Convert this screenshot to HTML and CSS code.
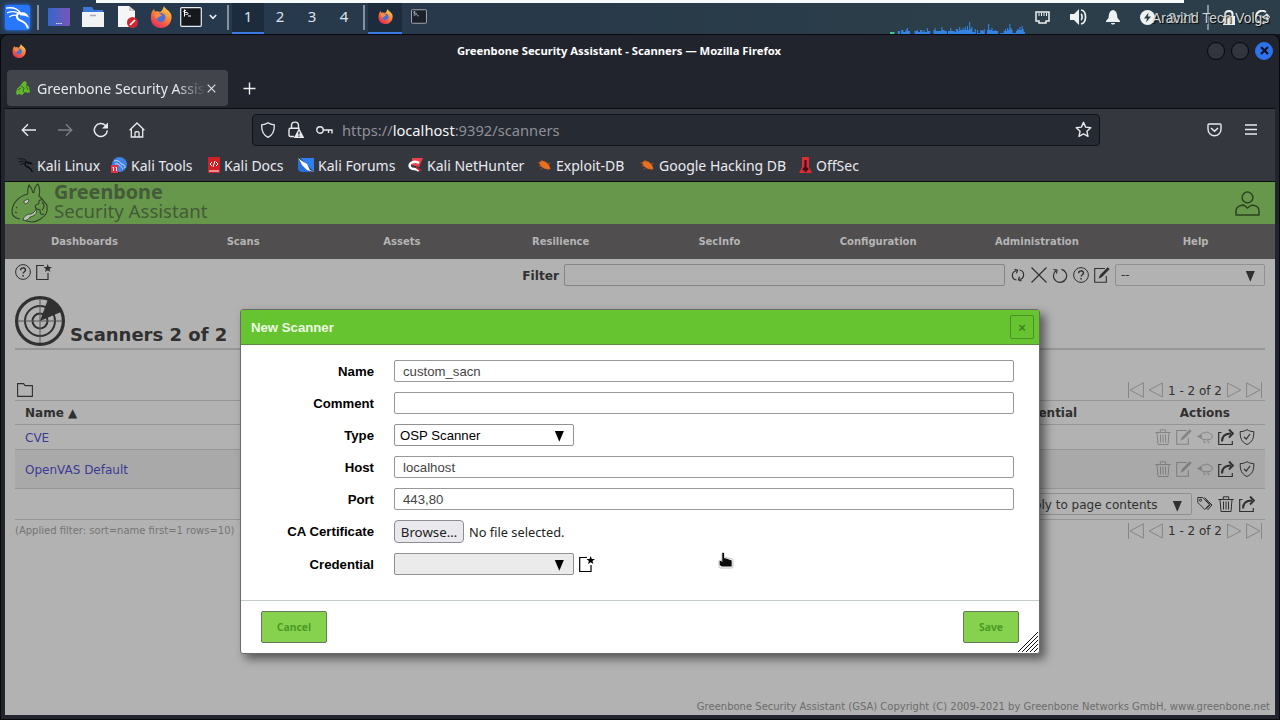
FILE: index.html
```
<!DOCTYPE html>
<html lang="en">
<head>
    <meta charset="utf-8">
    <title>Greenbone Security Assistant - Scanners</title>
    <link rel="stylesheet" href="styles.css">
</head>
<body>
    <svg class="defs">
        <linearGradient id="fox-grad" x1="0.8" y1="0" x2="0.2" y2="1">
            <stop offset="0" stop-color="#ffd84a"/>
            <stop offset="0.45" stop-color="#f9823c"/>
            <stop offset="1" stop-color="#e0245a"/>
        </linearGradient>
        <linearGradient id="desk-grad">
            <stop offset="0" stop-color="#3566cc"/>
            <stop offset="1" stop-color="#7a55b8"/>
        </linearGradient>
        <symbol id="firefox" viewBox="0 0 22 22">
            <path d="M14 0c1 3 5 4 7 8 2 6-2 14-10 14C4 22 0 17 1 10c0-3 1-5 3-7l1 3c2-1 3-1 5 0 2-1 3-3 4-6z" fill="url(#fox-grad)"/>
            <circle cx="10.800" cy="11.500" r="4.600" fill="#4b6fd6"/>
            <path d="M4 6c3-1 5 0 6 2l2 1c-1 2-4 1-5 4-2-1-3-4-3-7z" fill="#f98a3e"/>
        </symbol>
        <symbol id="dragon" viewBox="0 0 24 24">
            <path d="M1 3c6-1 11 0 14 5M2 7.500c5-2 9-1 12 1M4 11.500c3-2 6-2 8-1" fill="none" stroke="currentColor" stroke-width="1.300"/>
            <path d="M15 7.500c-4 0-5 5-1 7 3 1.500 7 2 8 8" fill="none" stroke="currentColor" stroke-width="2"/>
            <path d="M13 8c4-2 8-1 10 4-3-2-6-2-8-2z" fill="currentColor"/>
        </symbol>
        <symbol id="term" viewBox="0 0 22 20">
            <rect x="0.700" y="0.700" width="20.600" height="18.600" rx="1" fill="#15181c" stroke="#e8ecee" stroke-width="1.200"/>
            <path d="M6 3.500c-3-.5-3 2 0 2s3 2.500-.5 2M4.500 2.500v7M8 9h3" fill="none" stroke="#fff" stroke-width="1"/>
        </symbol>
        <symbol id="bug" viewBox="0 0 14 14">
            <path d="M1.500 4.500l3-2 4 1.500 3 3 1.500 4-2.500.5-4-1-3.500-2.500z" fill="#e8701e"/>
            <path d="M5 4L4 2M1 8h3M5 10l-2 1.500M10 10l1 2M0 5h3M10 6l3-.5" stroke="#b9531a" fill="none" stroke-width=".8"/>
        </symbol>
        <symbol id="help" viewBox="0 0 16 16">
            <circle cx="8" cy="8" r="7.400" fill="none" stroke="currentColor"/>
            <path d="M5.600 6.300c0-3.300 4.900-3.200 4.900-.3 0 1.700-2.400 1.800-2.400 3.600" fill="none" stroke="currentColor" stroke-width="1.400"/>
            <path d="M7.300 11h1.500v1.500H7.300z" fill="currentColor"/>
        </symbol>
        <symbol id="new" viewBox="0 0 16 16">
            <path d="M8 1.500H.700v14h11.300V9" fill="none" stroke="currentColor" stroke-width="1.200"/>
            <path d="M11.700 0l1.100 3h3.200l-2.500 2 .9 3-2.700-1.800L9 8l.9-3-2.500-2h3.200z" fill="currentColor"/>
        </symbol>
        <symbol id="edit" viewBox="0 0 16 16">
            <path d="M11 1.500H.700v13.800h11.600V9" fill="none" stroke="currentColor" stroke-width="1.100"/>
            <path d="M13.700.300l2 1.800L8 10l-3.500 1.700L6 8z" fill="currentColor"/>
        </symbol>
        <symbol id="trash" viewBox="0 0 16 16">
            <path d="M.300 3.500h15.400M5.300 3.200V.800h5.400v2.400M2 3.500l1 12h10l1-12M5.500 5.500v8M8 5.500v8M10.500 5.500v8" fill="none" stroke="currentColor"/>
        </symbol>
        <symbol id="sheep" viewBox="0 0 16 16">
            <path d="M4 6c1-3 4-2 4.500-2.300 2-1.200 3.300-.2 4 .8 2 0 3.500 1.700 2.500 4 0 1.500-2 2-3 1.800-2 .7-4 .7-5 0-2 .2-3-.8-3-2z" fill="none" stroke="currentColor"/>
            <path d="M0 7.500L4.500 5v5z" fill="currentColor"/>
            <path d="M7 10.500v3h1.500M11 10.500v3h1.500" fill="none" stroke="currentColor" stroke-width=".9"/>
        </symbol>
        <symbol id="export" viewBox="0 0 16 16">
            <path d="M3.500 3.500H.700v12h13.600V12" fill="none" stroke="currentColor" stroke-width="1.200"/>
            <path d="M4 12.500c0-6 3-8 9-8" fill="none" stroke="currentColor" stroke-width="1.900"/>
            <path d="M11 .500l4 4-4 4" fill="none" stroke="currentColor" stroke-width="1.900"/>
        </symbol>
        <symbol id="shield" viewBox="0 0 16 16">
            <path d="M8 .600c2 1.500 4.500 2 6.800 2C15 9 13.500 13 8 15.500 2.500 13 1 9 1.200 2.600 3.500 2.600 6 2.100 8 .600z" fill="none" stroke="currentColor"/>
            <path d="M5 8l2.200 2.200L11 5" fill="none" stroke="currentColor" stroke-width="1.200"/>
        </symbol>
        <symbol id="tags" viewBox="0 0 16 16">
            <path d="M.800 1.500h5l6.500 7-4.500 5L.800 6.500zM7.500 1.500l7.500 7.500-4.500 5M9.300 13l4-4.300-5-5" fill="none" stroke="currentColor"/>
            <circle cx="3.600" cy="4.200" r="1.100" fill="none" stroke="currentColor"/>
        </symbol>
        <symbol id="first" viewBox="0 0 16 16">
            <path d="M.500 0v16M15.400.800v14.400L2 8z" fill="none" stroke="currentColor" stroke-width=".9"/>
        </symbol>
        <symbol id="prev" viewBox="0 0 16 16">
            <path d="M14.400 1v14L1.200 8z" fill="none" stroke="currentColor" stroke-width=".9"/>
        </symbol>
    </svg>

    <div class="top-strip"></div>
    <header class="panel">
        <div class="launcher"><svg class="kali" viewBox="0 0 24 24"><use href="#dragon"/></svg></div>
        <i class="sep"></i>
        <div class="launcher"><svg width="22" height="18" viewBox="0 0 22 18"><rect width="22" height="18" rx="1" fill="url(#desk-grad)"/><path d="M8 15.500h6" stroke="#dde" stroke-dasharray="1.500 .700"/></svg></div>
        <div class="launcher"><svg width="22" height="20" viewBox="0 0 22 20"><path d="M1 0h9l2 3h9v5H1z" fill="#3b78d8"/><path d="M0 5h22v15H0z" fill="#f1f2f3"/><path d="M8 8.500h6" stroke="#aab" stroke-width="1.500"/></svg></div>
        <div class="launcher"><svg width="21" height="22" viewBox="0 0 21 22"><path d="M1 0h11l6 5v16H1z" fill="#f5f5f5"/><path d="M12 0v5h6" fill="#ccc"/><circle cx="15.500" cy="16.500" r="5.500" fill="#cf2634"/><path d="M13 19l5-5" stroke="#fff" stroke-width="1.700"/></svg></div>
        <div class="launcher"><svg width="22" height="22"><use href="#firefox"/></svg></div>
        <div class="launcher narrow"><svg width="22" height="20"><use href="#term"/></svg></div>
        <div class="launcher chevron"><svg width="8" height="6" viewBox="0 0 8 6"><path d="M.800 1L4 4.300 7.200 1" fill="none" stroke="#e8ecee" stroke-width="1.700"/></svg></div>
        <i class="sep wide"></i>
        <div class="workspace active">1</div>
        <div class="workspace">2</div>
        <div class="workspace">3</div>
        <div class="workspace">4</div>
        <i class="sep"></i>
        <div class="task active"><svg width="15" height="15"><use href="#firefox"/></svg></div>
        <div class="task"><svg width="16" height="15" class="dim"><use href="#term"/></svg></div>
        <div class="tray">
            <svg class="graph" width="136" height="12" viewBox="0 0 122 12" preserveAspectRatio="none">
                <path d="M0 10h4v2H0z" fill="#3fc79a"/>
                <path d="M7 12V9h2v3h1V8h2v2h2V8h1V6h1v3h2v3h4V9h2V8h1v2h2V8h2v2h1V8h1v2h2V6h1v3h2v3h3V8h1V6h1v3h3V9h2V5h1v3h2v1h2v3h1V9h2V6h1v3h3v1h1V7h2v2h1V5h1v3h2V6h1v2h1V5h1v3h1V4h1v4h1V0h1v7h1V5h1v5h2V7h1v5h1V8h1v3h2V8h2v1h1V7h1v5h2V8h1V2h1v6h2V6h1v3h2V8h1v1h2v3h2v-1h3V9h1V7h1v2h1V6h1v2h1V2h1v4h1v2h1v3h3V9h1V7h1v1h1V5h1v3h1V4h1v3h1v3h1v2z" fill="#3584e4"/>
            </svg>
            <svg class="ethernet" width="15" height="13" viewBox="0 0 15 13"><path d="M1 1h13v9h-3v2H4v-2H1z" fill="none" stroke="#eef2f2" stroke-width="1.500"/><path d="M4 2v3M6.500 2v3M9 2v3M11.500 2v3" stroke="#eef2f2"/></svg>
            <svg class="volume" width="18" height="16" viewBox="0 0 18 16"><path d="M0 5h4l5-5v16l-5-5H0z" fill="#eef2f2"/><path d="M11 5c1.500 1 1.500 5 0 6M11 1c6 1 6 13 0 14" fill="none" stroke="#eef2f2" stroke-width="1.700"/></svg>
            <svg class="bell" width="14" height="15" viewBox="0 0 14 15"><path d="M7 0c4 1 4 4 4.500 8L14 11v1H0v-1l2.500-3C3 4 3 1 7 0zM5 13h4c0 2-4 2-4 0z" fill="#eef2f2"/></svg>
            <svg class="power" width="15" height="15" viewBox="0 0 15 15"><circle cx="7.500" cy="7.500" r="7.500" fill="#eef2f2"/><path d="M8.500 2.500L4 8.500h3l-1 4 5-6H8z" fill="#2b3e49"/></svg>
            <span class="clock">8:21</span>
            <i class="sep tray-sep"></i>
            <svg class="lock" width="12" height="15" viewBox="0 0 12 15"><path d="M0 6h12v9H0z" fill="#eef2f2"/><path d="M2.500 7V4c0-4 7-4 7 0v3" fill="none" stroke="#eef2f2" stroke-width="2"/></svg>
            <svg class="logout" width="15" height="14" viewBox="0 0 15 14"><path d="M11 2C6-1 1 2 1 7s5 8 10 5M6 7h8M11 4l3 3-3 3" fill="none" stroke="#eef2f2" stroke-width="2"/></svg>
        </div>
        <span class="watermark">Aravind Tech Volgs</span>
    </header>

    <div class="window">
        <div class="titlebar">
            <svg width="14" height="14"><use href="#firefox"/></svg>
            <span class="window-title">Greenbone Security Assistant - Scanners — Mozilla Firefox</span>
            <div class="window-buttons">
                <i></i><i></i>
                <i class="close"><svg width="9" height="9" viewBox="0 0 9 9"><path d="M1 1l7 7M8 1L1 8" stroke="#0d1320" stroke-width="2.200"/></svg></i>
            </div>
        </div>
        <div class="tabs">
            <div class="tab">
                <svg width="15" height="14" viewBox="0 0 15 14"><path d="M0 12l1-4 3-3 3-4 2-1 2 2-1 2 3 2 1 5-2 1-3-1-3 3-3-1-2 1z" fill="#62b52d"/><path d="M5 5l3 2-1 4M10 5l2 4M2 9l3-2" fill="none" stroke="#2f7016"/></svg>
                <span class="tab-title">Greenbone Security Assistant</span>
                <svg width="9" height="9" viewBox="0 0 9 9"><path d="M.700.700l7.600 7.600M8.300.700L.700 8.300" stroke="#dcdde0" stroke-width="1.200"/></svg>
            </div>
            <svg width="13" height="13" viewBox="0 0 13 13"><path d="M6.500.500v12M.500 6.500h12" stroke="#f0f0f2" stroke-width="1.400"/></svg>
        </div>
        <div class="navbar">
            <div class="nav-icons">
                <svg width="16" height="16" viewBox="0 0 16 16"><path d="M15 8H1.500M7 2.300L1.300 8 7 13.700" fill="none" stroke="currentColor" stroke-width="1.400"/></svg>
                <svg width="16" height="16" viewBox="0 0 16 16" class="disabled"><path d="M1 8h13.500M9 2.300L14.700 8 9 13.700" fill="none" stroke="currentColor" stroke-width="1.400"/></svg>
                <svg width="16" height="16" viewBox="0 0 16 16"><path d="M14.300 8.500A6.500 6.500 0 1 1 12.500 3.500L14 5" fill="none" stroke="currentColor" stroke-width="1.500"/><path d="M15 .500v6H9z" fill="currentColor"/></svg>
                <svg width="16" height="16" viewBox="0 0 16 16"><path d="M.600 8.300L8 1l7.400 7.300M2.300 7v8h11.400V7M6 15v-4.500c0-1 4-1 4 0V15" fill="none" stroke="currentColor" stroke-width="1.300"/></svg>
            </div>
            <div class="urlbar">
                <svg width="16" height="16" viewBox="0 0 16 16"><path d="M8 .800c2 1.500 4 1.900 6.300 2.100C14.500 9 13 13 8 15.300 3 13 1.500 9 1.700 2.900 4 2.700 6 2.300 8 .800z" fill="none" stroke="currentColor" stroke-width="1.300"/></svg>
                <svg width="16" height="17" viewBox="0 0 16 17"><path d="M3.500 7V4.500c0-4.500 7-4.500 7 0V7M6 15.500H2.500c-1 0-1.500-.5-1.500-1.500V9c0-1 .5-1.700 1.500-1.700h9" fill="none" stroke="currentColor" stroke-width="1.400"/><path d="M11 7l5.200 10H5.800z" fill="currentColor"/><path d="M11 10.500v3M11 14.500v1.300" stroke="#262a33" stroke-width="1.300"/></svg>
                <svg width="17" height="10" viewBox="0 0 17 10"><circle cx="4" cy="5" r="3.200" fill="none" stroke="currentColor" stroke-width="1.400"/><path d="M7 5h9v3.500M12.500 5v3" fill="none" stroke="currentColor" stroke-width="1.400"/></svg>
                <span class="url">https://<b>localhost</b>:9392/scanners</span>
                <svg width="17" height="17" viewBox="0 0 17 17"><path d="M8.500 1.300l2.100 4.800 5.200.6-3.900 3.500 1.100 5.200-4.500-2.600L4 15.400l1.100-5.200L1.200 6.700l5.200-.6z" fill="none" stroke="currentColor" stroke-width="1.400" stroke-linejoin="round"/></svg>
            </div>
            <div class="nav-end">
                <svg width="15" height="14" viewBox="0 0 15 14"><path d="M2 1h11c.7 0 1 .4 1 1v4c0 9-13 9-13 0V2c0-.6.300-1 1-1z" fill="none" stroke="currentColor" stroke-width="1.400"/><path d="M4 5l3.500 3.300L11 5" fill="none" stroke="currentColor" stroke-width="1.500"/></svg>
                <svg width="12" height="11" viewBox="0 0 12 11"><path d="M0 1h12M0 5.500h12M0 10h12" stroke="currentColor" stroke-width="1.300"/></svg>
            </div>
        </div>
        <nav class="bookmarks">
            <a class="b1"><svg width="17" height="16" class="black"><use href="#dragon"/></svg>Kali Linux</a>
            <a class="b2"><svg width="16" height="16" viewBox="0 0 16 16"><circle cx="8.500" cy="7.500" r="7.500" fill="#3f82e8"/><path d="M3 4c5-1 6 1 7 3 3 0 4 2 4 4M4 7c3-1 5 1 8 5" fill="none" stroke="#cfe0fa"/><path d="M0 8h7v8H0z" fill="#dd3347"/><path d="M1.500 10.500h1V14M4.500 10.500h1V14" stroke="#fff" fill="none"/></svg>Kali Tools</a>
            <a class="b3"><svg width="12" height="16" viewBox="0 0 12 16"><path d="M0 0h12v16H0z" fill="#d11f26"/><path d="M1 14h10" stroke="#fff"/><path d="M4 5L2 7l2 2M8 5l2 2-2 2M7 4L5 10" stroke="#fff" fill="none"/></svg>Kali Docs</a>
            <a class="b4"><svg width="16" height="14" viewBox="0 0 16 14"><path d="M2 0h14v14z" fill="#2f7ff0"/><path d="M0 1v11l3 2h10z" fill="#2670d8"/><path d="M0 0l4 3 5 3 3 6 4 2-7-2-5-5-2-4z" fill="#fff"/></svg>Kali Forums</a>
            <a class="b5"><svg width="15" height="14" viewBox="0 0 15 14"><path d="M4 0h11l-4 9-7-2z" fill="#e8434e"/><path d="M11 5C7 2 0 5 2 9c2 4 6 0 9 4" fill="none" stroke="#fff" stroke-width="2.500"/><path d="M8 9l5 4" stroke="#c8202f" stroke-width="2"/></svg>Kali NetHunter</a>
            <a class="b6"><svg width="15" height="14"><use href="#bug"/></svg>Exploit-DB</a>
            <a class="b7"><svg width="15" height="14"><use href="#bug"/></svg>Google Hacking DB</a>
            <a class="b8"><svg width="13" height="16" viewBox="0 0 13 16"><path d="M3 0h7v10l3 6H0l3-6z" fill="#dd2a35"/><path d="M6.500 3v12M4 13l2.500-3L9 13" stroke="#3a0d12" stroke-width="2" fill="none"/></svg>OffSec</a>
        </nav>

        <main class="page">
            <div class="gsa-header">
                <svg class="dino" width="38" height="41" viewBox="0 0 38 41">
                    <g fill="none" stroke="#31432a" stroke-width="1.100">
                        <path d="M17 11c-1-3 0-6 1-9 2 2 3 4 4 8M23 10c0-4 1-7 4-9 2 4 2 8 1 12l4 4M17 11C8 13 1 20 1 29c0 4 3 6 8 7M32 17c1 3 5 4 4 7 1 3 0 5-1 7-3 4-9 8-14 8-4-1-7 0-9-3"/>
                        <path d="M32 17c-3-1-5 1-4 4M28 21c-4 0-5 3-2 5l3 1c0 4 1 5 4 4M31 19c3 3 2 6 0 8M4 29l2 1M5 25l1-1"/>
                    </g>
                    <path d="M12 37c1-4 4-6 8-6 3-1 4-3 5-5 2 5-2 7-6 8-2 3-4 4-7 3z" fill="#bac4b3" stroke="#31432a" stroke-width=".9"/>
                    <path d="M13 18l4-2 1 2-3 3-2-1z" fill="#c6cec1" stroke="#31432a" stroke-width=".8"/>
                </svg>
                <div class="brand"><b>Greenbone</b><span>Security Assistant</span></div>
                <svg class="user" width="26" height="25" viewBox="0 0 26 25"><circle cx="12.500" cy="6.500" r="5.400" fill="none" stroke="#2b4321" stroke-width="1.500"/><path d="M1 24v-4c0-5 7-7 9-5l2.500 2 2.500-2c3-2 9 0 9 5v4z" fill="none" stroke="#2b4321" stroke-width="1.500"/></svg>
            </div>
            <nav class="menu">
                <span>Dashboards</span><span>Scans</span><span>Assets</span><span>Resilience</span>
                <span>SecInfo</span><span>Configuration</span><span>Administration</span><span>Help</span>
            </nav>
            <div class="content">
                <div class="toolbar">
                    <div class="page-icons"><svg class="icon"><use href="#help"/></svg><svg class="icon"><use href="#new"/></svg></div>
                    <div class="filter">
                        <b>Filter</b>
                        <div class="filter-input"></div>
                        <div class="filter-icons">
                            <svg class="icon" viewBox="0 0 16 16"><path d="M6.500 13C1 12 1 5 6.500 3.500M9.500 3c5.500 1 5.500 8.500 0 9.500" fill="none" stroke="currentColor" stroke-width="1.200"/><path d="M4.500 2.200l3 1-1 3M11.500 14l-3-1.200 1-3" fill="none" stroke="currentColor" stroke-width="1.200"/></svg>
                            <svg class="icon" viewBox="0 0 16 16"><path d="M.500.500l15 15M15.500.500l-15 15" stroke="currentColor" stroke-width="1.200"/></svg>
                            <svg class="icon" viewBox="0 0 16 16"><path d="M4 3.500A6.600 6.600 0 1 0 9.500 2.300" fill="none" stroke="currentColor" stroke-width="1.200"/><path d="M1.500 2.500l3.500.5-.5 3.500" fill="none" stroke="currentColor" stroke-width="1.200"/></svg>
                            <svg class="icon"><use href="#help"/></svg>
                            <svg class="icon"><use href="#edit"/></svg>
                        </div>
                        <div class="select filter-select"><span>--</span><i>▼</i></div>
                    </div>
                </div>
                <div class="section-head">
                    <svg width="50" height="50" viewBox="0 0 50 50">
                        <g fill="none" stroke="#303030"><circle cx="25" cy="25" r="23.400" stroke-width="3.200"/><circle cx="25" cy="25" r="15" stroke-width="2"/><circle cx="25" cy="25" r="7.500" stroke-width="2"/><path d="M25 3v44M3 25h44" stroke="#555"/></g>
                        <path d="M25 25L33 3l6 3 7 10z" fill="#303030"/>
                    </svg>
                    <h1>Scanners 2 of 2</h1>
                </div>
                <div class="pager-row top">
                    <svg width="16" height="14" viewBox="0 0 16 14"><path d="M.600.600h6l1.500 2h7.300v10.800H.600z" fill="none" stroke="#303030" stroke-width="1.100"/></svg>
                    <div class="pager"><svg class="icon"><use href="#first"/></svg><svg class="icon"><use href="#prev"/></svg><span>1 - 2 of 2</span><svg class="icon flip"><use href="#prev"/></svg><svg class="icon flip"><use href="#first"/></svg></div>
                </div>
                <div class="row head"><b class="name">Name ▲</b><b class="cred">Credential</b><b class="actions-title">Actions</b></div>
                <div class="row cve">
                    <a>CVE</a>
                    <div class="actions"><svg class="icon off"><use href="#trash"/></svg><svg class="icon off"><use href="#edit"/></svg><svg class="icon off"><use href="#sheep"/></svg><svg class="icon"><use href="#export"/></svg><svg class="icon"><use href="#shield"/></svg></div>
                </div>
                <div class="row openvas">
                    <a>OpenVAS Default</a>
                    <div class="actions"><svg class="icon off"><use href="#trash"/></svg><svg class="icon off"><use href="#edit"/></svg><svg class="icon off"><use href="#sheep"/></svg><svg class="icon"><use href="#export"/></svg><svg class="icon"><use href="#shield"/></svg></div>
                </div>
                <div class="row bulk">
                    <div class="select bulk-select"><span>Apply to page contents</span><i>▼</i></div>
                    <div class="actions"><svg class="icon"><use href="#tags"/></svg><svg class="icon"><use href="#trash"/></svg><svg class="icon"><use href="#export"/></svg></div>
                </div>
                <div class="pager-row">
                    <small>(Applied filter: sort=name first=1 rows=10)</small>
                    <div class="pager"><svg class="icon"><use href="#first"/></svg><svg class="icon"><use href="#prev"/></svg><span>1 - 2 of 2</span><svg class="icon flip"><use href="#prev"/></svg><svg class="icon flip"><use href="#first"/></svg></div>
                </div>
            </div>
            <footer>Greenbone Security Assistant (GSA) Copyright (C) 2009-2021 by Greenbone Networks GmbH, www.greenbone.net</footer>
        </main>
    </div>

    <div class="dialog">
        <div class="dialog-title"><b>New Scanner</b><div class="dialog-close">×</div></div>
        <div class="form">
            <label>Name</label><div class="input">custom_sacn</div>
            <label>Comment</label><div class="input"></div>
            <label>Type</label><div class="select"><span>OSP Scanner</span><i>▼</i></div>
            <label>Host</label><div class="input">localhost</div>
            <label>Port</label><div class="input">443,80</div>
            <label>CA Certificate</label><div class="file"><span class="browse">Browse…</span>No file selected.</div>
            <label>Credential</label><div class="cred-field"><div class="select empty"><span></span><i>▼</i></div><svg class="icon"><use href="#new"/></svg></div>
        </div>
        <div class="dialog-foot">
            <div class="button">Cancel</div>
            <div class="button save">Save</div>
        </div>
        <svg class="resize" width="20" height="20" viewBox="0 0 20 20"><path d="M0 20L20 0M4 20L20 4M8 20L20 8M12 20l8-8M16 20l4-4" stroke="#111"/></svg>
    </div>
    <svg class="cursor" width="16" height="17" viewBox="0 0 16 17"><path d="M4 1c1-1 2-1 2 0v4l8 2c1 0 1 1 1 2v6c0 1-1 1-2 1H2c-1 0-1-1-1-2V9c0-1 2-1 3 0z" fill="#fff" stroke="#aaa" stroke-width=".7"/><path d="M4.300 1v9L3 9H1.700v4l2 1.500h10V8.500L11 7.500l-2-.7-3-.8V1z" fill="#0b0b0b"/></svg>
</body>
</html>
```
FILE: styles.css
```
* {
    box-sizing: border-box;
}

body {
    margin: 0;
    width: 1280px;
    height: 720px;
    overflow: hidden;
    position: relative;
    background: #11141b;
    font-family: "Noto Sans", sans-serif;
}

svg {
    display: block;
    flex: none;
}

.defs {
    position: absolute;
    width: 0;
    height: 0;
}

i {
    font-style: normal;
}

/* desktop panel */

.top-strip {
    position: absolute;
    left: 96px;
    top: 0;
    width: 1088px;
    height: 3px;
    background: #f7fafa;
}

.panel {
    display: flex;
    align-items: center;
    height: 34px;
    background: linear-gradient(90deg, #26394f, #27394a 35%, #2b3e49 75%);
}

.launcher {
    display: flex;
    justify-content: center;
    align-items: center;
    width: 34px;
    height: 34px;
}

.launcher.narrow {
    width: 26px;
}

.launcher.chevron {
    width: 18px;
}

.kali {
    width: 25px;
    height: 25px;
    color: #fff;
    background: #2777ff;
    border-radius: 2px;
    box-shadow: 0 0 4px #2777ff;
}

.sep {
    width: 2px;
    height: 25px;
    margin: 0 3px;
    background: #8593a0;
}

.sep.wide {
    margin-left: 5px;
}

.workspace,
.task {
    display: flex;
    align-items: center;
    justify-content: center;
    width: 32px;
    height: 34px;
    border-bottom: 2px solid transparent;
    font-size: 15px;
    color: #dde3e8;
}

.task {
    width: 34px;
}

.active {
    background: #1c2c3d;
    border-color: #3b7be0;
}

.dim {
    opacity: .7;
}

.tray {
    display: flex;
    align-items: center;
    flex: 1;
    height: 34px;
    margin-left: 454px;
}

.graph {
    align-self: flex-end;
}

.ethernet {
    margin-left: 9px;
}

.volume {
    margin-left: 20px;
}

.bell {
    margin-left: 18px;
}

.power {
    margin-left: 20px;
}

.clock {
    width: 28px;
    margin-left: 13px;
    font-size: 14px;
    color: #b9c4c9;
}

.tray-sep {
    margin: 0 14px 0 11px;
}

.logout {
    margin-left: 20px;
}

.watermark {
    position: absolute;
    left: 1152px;
    top: 10px;
    font: 13.8px/17px "Liberation Sans", sans-serif;
    color: #cfd5d8;
    text-shadow: 1px 1px 1px #000;
    white-space: nowrap;
}

/* browser window */

.window {
    height: 686px;
    padding: 0 4px;
    border: 1px solid #07090d;
    border-radius: 8px 8px 0 0;
    background: #21242c;
    color: #e9eaee;
}

.titlebar {
    display: flex;
    align-items: center;
    height: 31px;
    padding: 0 2px 0 7px;
}

.window-title {
    flex: 1;
    padding-left: 5px;
    font-size: 11.25px;
    font-weight: bold;
    text-align: center;
    color: #fff;
}

.window-buttons {
    display: flex;
    gap: 6px;
}

.window-buttons i {
    display: flex;
    align-items: center;
    justify-content: center;
    width: 18px;
    height: 18px;
    border: 1px solid #05070a;
    border-radius: 50%;
    background: #32353d;
}

.window-buttons .close {
    background: #2e72ee;
    border-color: #2e72ee;
}

.tabs {
    display: flex;
    align-items: center;
    gap: 15px;
    height: 43px;
    padding: 2px 0 0 2px;
    border-bottom: 1px solid #0c0e13;
}

.tab {
    display: flex;
    align-items: center;
    width: 221px;
    height: 36px;
    padding: 0 11px 0 9px;
    border-radius: 4px;
    background: #42444b;
}

.tab-title {
    width: 169px;
    margin: 0 1px 0 6px;
    overflow: hidden;
    white-space: nowrap;
    font-size: 14.1px;
    mask-image: linear-gradient(90deg, #000 82%, transparent);
}

.navbar {
    display: flex;
    align-items: center;
    height: 41px;
    background: #35373f;
}

.nav-icons {
    display: flex;
    gap: 20px;
    width: 247px;
    padding-left: 16px;
}

.disabled {
    opacity: .4;
}

.urlbar {
    display: flex;
    align-items: center;
    width: 848px;
    height: 32px;
    padding: 0 7px;
    border: 1px solid #101218;
    border-radius: 4px;
    background: #262a33;
}

.urlbar svg + svg {
    margin-left: 12px;
}

.url {
    flex: 1;
    margin-left: 9px;
    font-size: 14.7px;
    color: #8e9097;
}

.url b {
    font-weight: normal;
    color: #f5f5f7;
}

.nav-end {
    display: flex;
    flex: 1;
    align-items: center;
    justify-content: flex-end;
    gap: 23px;
    padding-right: 18px;
}

.bookmarks {
    display: flex;
    height: 32px;
    padding: 0 0 1px 12px;
    background: #35373f;
    border-bottom: 1px solid #0c0e13;
}

.bookmarks a {
    display: flex;
    align-items: center;
    gap: 4px;
    font-size: 14px;
    white-space: nowrap;
}

.b1 { width: 94px; }
.b2 { width: 97px; }
.b3 { width: 90px; }
.b4 { width: 110px; }
.b5 { width: 129px; }
.b6 { width: 103px; }
.b7 { width: 159px; }

.bookmarks .b1 { gap: 3px; }

.black {
    color: #0b0c0f;
}

/* web page */

.page {
    height: 533px;
    overflow: hidden;
    font: 12px "DejaVu Sans", sans-serif;
    color: #303030;
    background: #b2b2b2;
}

.gsa-header {
    display: flex;
    align-items: center;
    height: 42px;
    padding: 0 14px 0 6px;
    background: #66974a;
}

.brand {
    flex: 1;
    display: flex;
    flex-direction: column;
    margin: -5px 0 0 5px;
    font: 18.6px/19px "Noto Sans", sans-serif;
    color: #445a39;
}

.brand b {
    font-size: 19.8px;
}

.menu {
    display: grid;
    grid-template-columns: repeat(8, 1fr);
    align-items: center;
    height: 35px;
    background: #504e4e;
    text-align: center;
    font-size: 10px;
    font-weight: bold;
    color: #b5b5b5;
}

.content {
    height: 439px;
    padding: 0 10px;
}

.icon {
    width: 16px;
    height: 16px;
}

.off {
    opacity: .35;
}

.flip {
    transform: scaleX(-1);
}

.toolbar {
    display: flex;
    justify-content: space-between;
    height: 37px;
    padding-top: 5px;
}

.page-icons {
    display: flex;
    gap: 5px;
}

.filter {
    display: flex;
    align-items: center;
    height: 22px;
}

.filter b {
    padding-top: 1px;
    font-size: 12.2px;
}

.filter-input {
    width: 441px;
    height: 22px;
    margin-left: 5px;
    border: 1px solid #858585;
    border-radius: 2px;
}

.filter-icons {
    display: flex;
    gap: 5px;
    margin: 0 5px;
}

.select {
    display: flex;
    align-items: center;
    justify-content: space-between;
    width: 180px;
    height: 22px;
    padding: 0 8px 0 5px;
    border: 1px solid #909090;
    border-radius: 2px;
}

.filter-select {
    width: 150px;
}

.bulk-select {
    padding-top: 1px;
}

.select i {
    font: 14px/20px "DejaVu Sans", sans-serif;
    transform: scaleX(.85);
}

.section-head {
    display: flex;
    align-items: flex-end;
    gap: 5px;
    height: 54px;
    padding-bottom: 2px;
    border-bottom: 2px solid #959797;
}

h1 {
    margin: 0;
    font-size: 18px;
    line-height: 22px;
}

.pager-row {
    display: flex;
    align-items: center;
    justify-content: space-between;
    height: 21px;
}

.pager-row.top {
    height: 51px;
    padding: 30px 0 0 2px;
    border-bottom: 1px solid #949696;
}

.pager {
    display: flex;
    align-items: center;
    gap: 4px;
    margin-right: 3px;
    white-space: nowrap;
}

.top .pager span {
    padding-top: 1px;
}

.pager .icon {
    color: #818181;
}

small {
    font-size: 10px;
    color: #757575;
}

.row {
    display: flex;
    align-items: center;
    justify-content: space-between;
    height: 25px;
    padding: 0 10px;
    border-bottom: 1px solid #949696;
}

.row a {
    padding-top: 2px;
    color: #3c3a94;
}

.head {
    height: 24px;
}

.name {
    width: 982px;
}

.cred {
    flex: 1;
}

.actions-title {
    margin-right: 25px;
}

.actions {
    display: flex;
    gap: 5px;
}

.openvas {
    height: 39px;
    background: #a9a9a9;
}

.bulk {
    height: 31px;
    justify-content: flex-end;
    gap: 5px;
}

footer {
    padding-right: 5px;
    text-align: right;
    font-size: 10px;
    line-height: 17px;
    color: #6c6c6c;
}

/* new scanner dialog */

.dialog {
    position: absolute;
    left: 240px;
    top: 309px;
    width: 800px;
    height: 345px;
    border: 1px solid #6b6b6b;
    border-radius: 3px;
    background: #fff;
    box-shadow: 5px 5px 10px rgba(0, 0, 0, .5);
    font: 13.2px "Liberation Sans", sans-serif;
    color: #000;
}

.dialog-title {
    display: flex;
    align-items: center;
    justify-content: space-between;
    height: 35px;
    padding: 0 5px 0 10px;
    border-bottom: 1px solid #5e8a43;
    background: #66c430;
    color: #eefbe4;
}

.dialog-close {
    width: 24px;
    height: 24px;
    border: 1px solid #4c8f27;
    border-radius: 2px;
    line-height: 23px;
    text-align: center;
    font-weight: bold;
    color: #438222;
}

.form {
    display: grid;
    grid-template-columns: 133px 620px;
    grid-template-rows: repeat(5, 22px) 23px 22px;
    row-gap: 10px;
    column-gap: 20px;
    align-items: center;
    height: 256px;
    padding-top: 15px;
    border-bottom: 1px solid #c3cbc9;
}

.form label {
    text-align: right;
    font-weight: bold;
}

.input {
    height: 22px;
    padding-left: 8px;
    border: 1px solid #989898;
    border-radius: 2px;
    line-height: 21px;
    color: #444;
}

.file {
    display: flex;
    align-items: center;
    gap: 5px;
    font-family: "Noto Sans", sans-serif;
    font-size: 12.8px;
    color: #222;
}

.browse {
    width: 70px;
    height: 23px;
    border: 1px solid #8c8c94;
    border-radius: 4px;
    background: #e9e9ed;
    font-size: 13.3px;
    line-height: 22px;
    text-align: center;
}

.cred-field {
    display: flex;
    align-items: center;
    gap: 5px;
}

.empty {
    background: #ebebeb;
}

.dialog-foot {
    display: flex;
    justify-content: space-between;
    padding: 10px 20px;
}

.button {
    width: 66px;
    height: 32px;
    border: 1px solid #66795a;
    border-radius: 2px;
    background: #86d24e;
    font: bold 10.4px/30px "Noto Sans", sans-serif;
    text-align: center;
    color: #4c9a25;
}

.save {
    width: 56px;
}

.resize {
    position: absolute;
    right: 1px;
    bottom: 1px;
}

.cursor {
    position: absolute;
    left: 718px;
    top: 552px;
}
```
